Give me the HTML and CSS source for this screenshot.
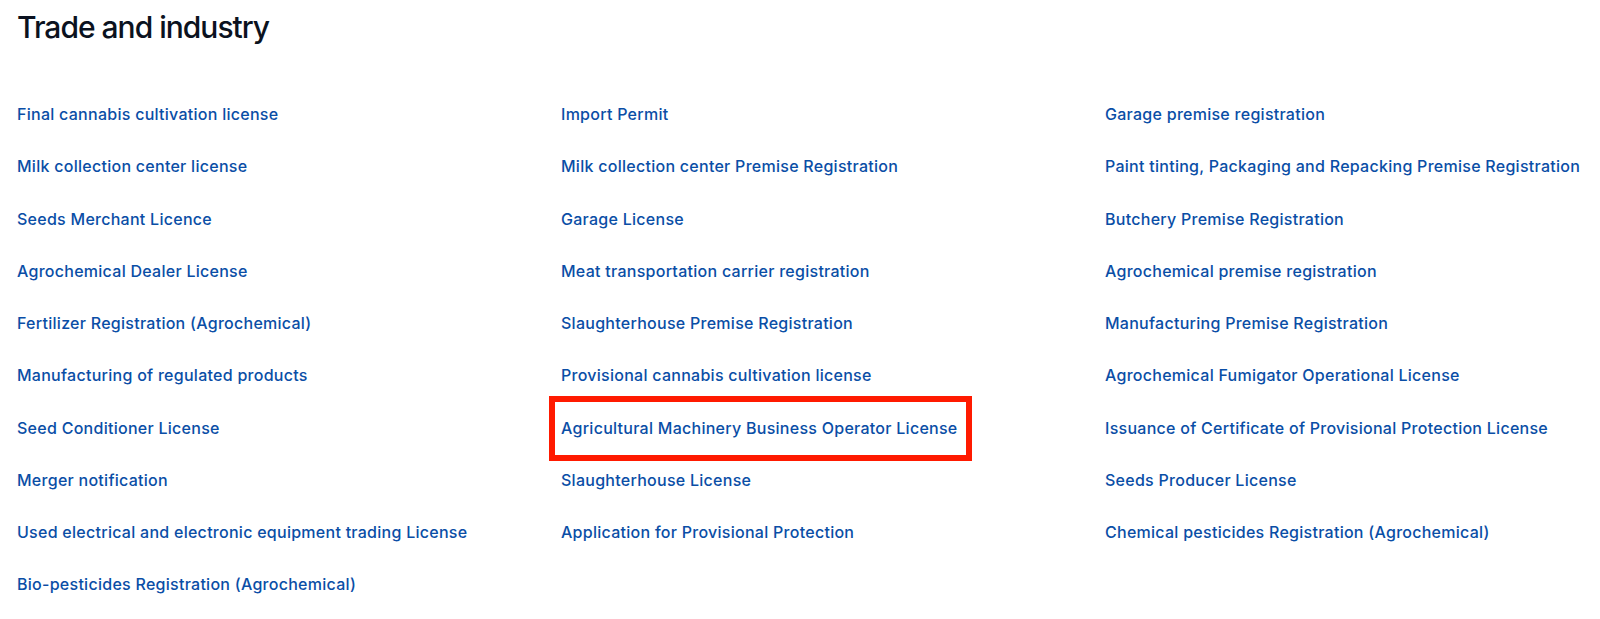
FILE: index.html
```html
<!DOCTYPE html>
<html lang="en">
<head>
<meta charset="utf-8">
<title>Trade and industry</title>
<link rel="stylesheet" href="styles.css">
</head>
<body>
<main class="page">
  <h1 class="title">Trade and industry</h1>
  <div class="columns">
    <ul class="col">
      <li><a class="link" href="#">Final cannabis cultivation license</a></li>
      <li><a class="link" href="#">Milk collection center license</a></li>
      <li><a class="link" href="#">Seeds Merchant Licence</a></li>
      <li><a class="link" href="#">Agrochemical Dealer License</a></li>
      <li><a class="link" href="#">Fertilizer Registration (Agrochemical)</a></li>
      <li><a class="link" href="#">Manufacturing of regulated products</a></li>
      <li><a class="link" href="#">Seed Conditioner License</a></li>
      <li><a class="link" href="#">Merger notification</a></li>
      <li><a class="link" href="#">Used electrical and electronic equipment trading License</a></li>
      <li><a class="link" href="#">Bio-pesticides Registration (Agrochemical)</a></li>
    </ul>
    <ul class="col">
      <li><a class="link" href="#">Import Permit</a></li>
      <li><a class="link" href="#">Milk collection center Premise Registration</a></li>
      <li><a class="link" href="#">Garage License</a></li>
      <li><a class="link" href="#">Meat transportation carrier registration</a></li>
      <li><a class="link" href="#">Slaughterhouse Premise Registration</a></li>
      <li><a class="link" href="#">Provisional cannabis cultivation license</a></li>
      <li><a class="link link-marked" href="#">Agricultural Machinery Business Operator License</a></li>
      <li><a class="link" href="#">Slaughterhouse License</a></li>
      <li><a class="link" href="#">Application for Provisional Protection</a></li>
    </ul>
    <ul class="col">
      <li><a class="link" href="#">Garage premise registration</a></li>
      <li><a class="link" href="#">Paint tinting, Packaging and Repacking Premise Registration</a></li>
      <li><a class="link" href="#">Butchery Premise Registration</a></li>
      <li><a class="link" href="#">Agrochemical premise registration</a></li>
      <li><a class="link" href="#">Manufacturing Premise Registration</a></li>
      <li><a class="link" href="#">Agrochemical Fumigator Operational License</a></li>
      <li><a class="link" href="#">Issuance of Certificate of Provisional Protection License</a></li>
      <li><a class="link" href="#">Seeds Producer License</a></li>
      <li><a class="link" href="#">Chemical pesticides Registration (Agrochemical)</a></li>
    </ul>
  </div>
</main>
</body>
</html>
```

FILE: styles.css
```css
html, body {
  margin: 0;
  padding: 0;
  background: #ffffff;
}

.page {
  padding: 9px 0 0 17px;
  font-family: Inter, "Noto Sans", "Liberation Sans", sans-serif;
}

.title {
  margin: 0;
  font-size: 30px;
  line-height: 36px;
  font-weight: 500;
  color: #0b1220;
  letter-spacing: -1px;
}

.columns {
  display: grid;
  grid-template-columns: repeat(3, 529px);
  column-gap: 15px;
  margin-top: 57px;
}

.col {
  list-style: none;
  margin: 0;
  padding: 0;
  display: flex;
  flex-direction: column;
  gap: 28.27px;
}

.col li {
  line-height: 24px;
  height: 24px;
  white-space: nowrap;
}

.link {
  font-size: 16px;
  font-weight: 500;
  color: #0a4ea6;
  text-decoration: none;
  letter-spacing: 0.27px;
}

.link-marked {
  display: inline-block;
  border: 6px solid #ff1a00;
  padding: 14px 8px 15px 6px;
  margin: -20px 0 0 -12px;
}
```
